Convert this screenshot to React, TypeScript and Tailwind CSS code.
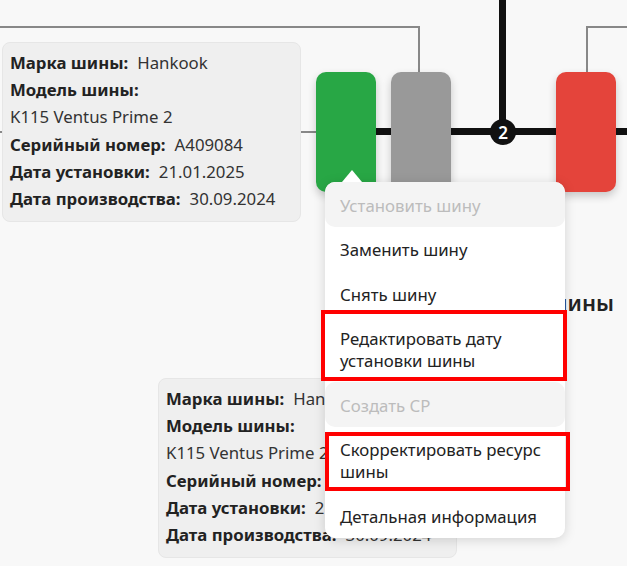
import React from 'react';

type Info = { label: string; value: string };

const tireInfo: Info[] = [
  { label: 'Марка шины:', value: 'Hankook' },
  { label: 'Модель шины:', value: 'K115 Ventus Prime 2' },
  { label: 'Серийный номер:', value: 'A409084' },
  { label: 'Дата установки:', value: '21.01.2025' },
  { label: 'Дата производства:', value: '30.09.2024' },
];

const TireCard: React.FC<{ className: string }> = ({ className }) => (
  <div
    className={`absolute w-[299px] rounded-lg border border-[#e6e6e6] bg-[#efefef] px-[7px] pt-[6px] pb-[9px] text-[16.8px] leading-[27.2px] ${className}`}
  >
    {tireInfo.map((row) => (
      <div key={row.label} className="flex flex-wrap gap-x-[9px]">
        <span className="font-bold text-[#222]">{row.label}</span>
        <span className="text-[#333]">{row.value}</span>
      </div>
    ))}
  </div>
);

type MenuItem = { text: string; disabled?: boolean };

const menuItems: MenuItem[] = [
  { text: 'Установить шину', disabled: true },
  { text: 'Заменить шину' },
  { text: 'Снять шину' },
  { text: 'Редактировать дату установки шины' },
  { text: 'Создать СР', disabled: true },
  { text: 'Скорректировать ресурс шины' },
  { text: 'Детальная информация' },
];

const ContextMenu: React.FC = () => (
  <div className="absolute left-[325px] top-[182px] w-[240px]">
    {/* arrow */}
    <div className="absolute -top-[12px] left-[17px] h-0 w-0 border-x-[10px] border-b-[12px] border-x-transparent border-b-white" />
    <div className="flex flex-col rounded-[10px] bg-white shadow-[0_2px_12px_rgba(0,0,0,0.15)]">
      {menuItems.map((item) => (
        <div
          key={item.text}
          className={`rounded-[10px] pt-[12.5px] pb-[10px] pl-[15px] pr-[20px] text-[16.8px] leading-[22px] ${
            item.disabled ? 'bg-[#f4f4f4] text-[#bcbcbc]' : 'text-[#222]'
          }`}
        >
          {item.text}
        </div>
      ))}
    </div>
  </div>
);

const Tire: React.FC<{ color: string }> = ({ color }) => (
  <div className={`h-[120px] w-[60px] rounded-[10px] shadow-[0_4px_8px_rgba(0,0,0,0.2)] ${color}`} />
);

export default function App() {
  return (
    <div
      className="relative h-[566px] w-[627px] overflow-hidden bg-[#f8f8f8]"
      style={{ fontFamily: '"Noto Sans", "Open Sans", sans-serif' }}
    >
      {/* thin connectors */}
      <div className="absolute left-0 top-[26px] h-[2px] w-[420px] bg-[#888]" />
      <div className="absolute left-[418px] top-[26px] h-[46px] w-[2px] bg-[#888]" />
      <div className="absolute left-[586px] top-[26px] h-[2px] w-[41px] bg-[#888]" />
      <div className="absolute left-[586px] top-[26px] h-[46px] w-[2px] bg-[#888]" />
      <div className="absolute left-0 top-[131px] h-[2px] w-[316px] bg-[#888]" />

      {/* axle */}
      <div className="absolute left-[376px] top-[128px] h-[7px] w-[251px] bg-[#111]" />
      <div className="absolute left-[499px] top-0 h-[132px] w-[7px] bg-[#111]" />
      <div className="absolute left-[490px] top-[119px] flex h-[26px] w-[26px] items-center justify-center rounded-full bg-[#111] text-[17px] font-semibold leading-none text-white">
        2
      </div>

      {/* tires */}
      <div className="absolute left-[316px] top-[72px] flex gap-[15px]">
        <Tire color="bg-[#28a745]" />
        <Tire color="bg-[#999]" />
        <div className="w-[75px]" />
        <Tire color="bg-[#e4443b]" />
      </div>

      <div className="absolute right-[13px] top-[287px] text-[22px] font-semibold leading-[30px] text-[#222]">
        Запасные шины
      </div>

      <TireCard className="left-[2px] top-[42px]" />
      <TireCard className="left-[158px] top-[378px]" />

      <ContextMenu />

      {/* highlight frames */}
      <div className="pointer-events-none absolute left-[321px] top-[310px] h-[71px] w-[246px] border-4 border-[#ff0000]" />
      <div className="pointer-events-none absolute left-[325px] top-[432px] h-[59px] w-[245px] border-4 border-[#ff0000]" />
    </div>
  );
}
